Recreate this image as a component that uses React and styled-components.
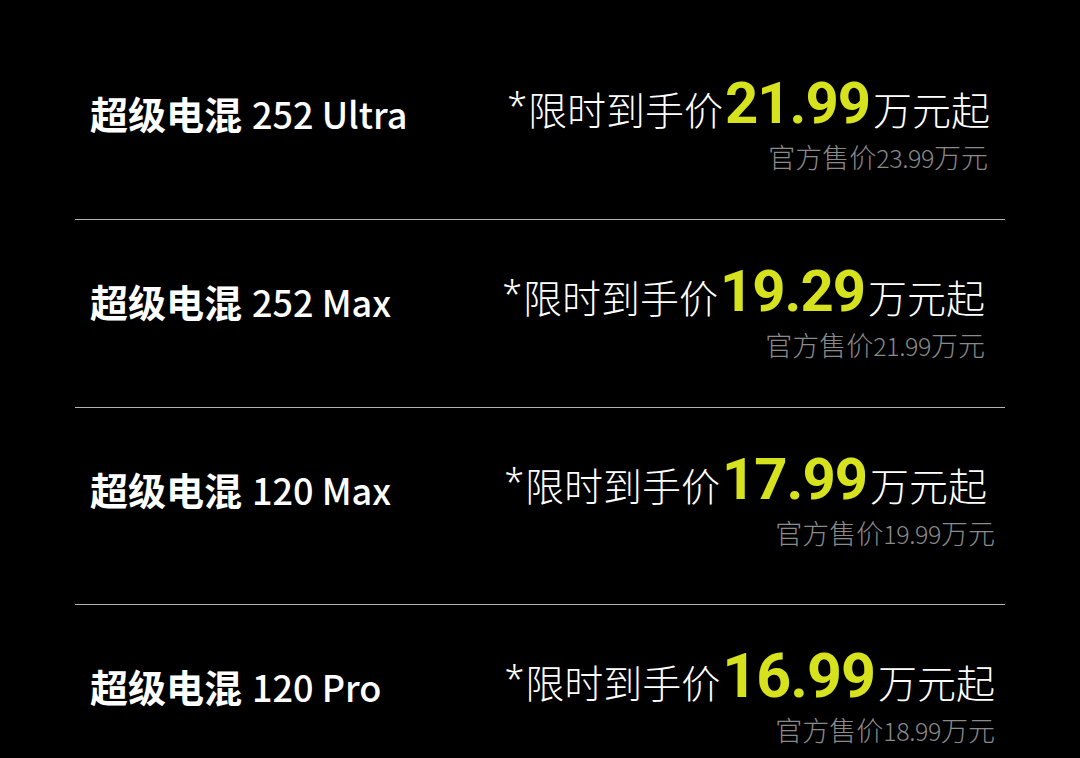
import React from "react";
import styled, { createGlobalStyle } from "styled-components";

const Global = createGlobalStyle`
  html, body {
    margin: 0;
    padding: 0;
    background: #000;
  }
  body {
    width: 1080px;
    height: 758px;
    overflow: hidden;
    font-family: "Noto Sans CJK SC", "Noto Sans", sans-serif;
  }
`;

const Page = styled.div`
  width: 1080px;
  height: 758px;
  background: #000;
  box-sizing: border-box;
  padding: 32px 75px 0 75px;
  overflow: hidden;
`;

const Row = styled.div`
  box-sizing: border-box;
  height: ${(p) => p.$h}px;
  display: flex;
  justify-content: space-between;
  align-items: flex-start;
  padding-top: 46px;
  border-bottom: ${(p) => (p.$last ? "none" : "1px solid #b4b4b4")};
`;

const Title = styled.div`
  margin-top: 5px;
  padding-left: 15px;
  line-height: 60px;
  color: #fff;
  font-family: "Noto Sans CJK SC", sans-serif;
  font-size: 38px;
  font-weight: 700;
  white-space: nowrap;
`;

const Model = styled.span`
  font-weight: 500;
  font-size: 36px;
  margin-left: 10px;
`;

const PriceBlock = styled.div`
  display: flex;
  flex-direction: column;
  align-items: flex-end;
  padding-right: ${(p) => p.$pr}px;
`;

const PriceLine = styled.div`
  height: 60px;
  display: flex;
  align-items: center;
  color: #fff;
  font-family: "Noto Sans CJK SC", sans-serif;
  font-size: 39px;
  font-weight: 300;
  white-space: nowrap;
`;

const Star = styled.span`
  font-family: "Noto Sans", sans-serif;
  font-size: 36px;
  line-height: 1;
  align-self: flex-start;
  margin-top: 10px;
  margin-right: 1px;
`;

const Amount = styled.span`
  color: #d6e21d;
  font-family: Roboto, "Noto Sans", sans-serif;
  font-size: ${(p) => p.$fs}px;
  line-height: 1;
  font-weight: 700;
  letter-spacing: -1px;
  margin: 0 3px 0 2px;
  position: relative;
  top: -5px;
`;

const Sub = styled.div`
  margin-top: 4px;
  margin-right: ${(p) => p.$mr}px;
  line-height: 30px;
  color: #8a8a8a;
  font-family: "Noto Sans CJK SC", sans-serif;
  font-size: 27px;
  font-weight: 300;
  white-space: nowrap;
`;

const SubNum = styled.span`
  font-size: 25px;
  letter-spacing: -0.4px;
`;

const rows = [
  { model: "252 Ultra", price: "21.99", orig: "23.99", h: 188, pr: 15, mr: 2, fs: 58 },
  { model: "252 Max", price: "19.29", orig: "21.99", h: 188, pr: 20, mr: 0, fs: 58 },
  { model: "120 Max", price: "17.99", orig: "19.99", h: 197, pr: 18, mr: -8, fs: 58 },
  { model: "120 Pro", price: "16.99", orig: "18.99", h: 200, pr: 10, mr: 0, fs: 61 },
];

export default function App() {
  return (
    <>
      <Global />
      <Page>
        {rows.map((r, i) => (
          <Row key={r.model} $h={r.h} $last={i === rows.length - 1}>
            <Title>
              超级电混<Model>{r.model}</Model>
            </Title>
            <PriceBlock $pr={r.pr}>
              <PriceLine>
                <Star>*</Star>限时到手价<Amount $fs={r.fs}>{r.price}</Amount>万元起
              </PriceLine>
              <Sub $mr={r.mr}>
                官方售价<SubNum>{r.orig}</SubNum>万元
              </Sub>
            </PriceBlock>
          </Row>
        ))}
      </Page>
    </>
  );
}
